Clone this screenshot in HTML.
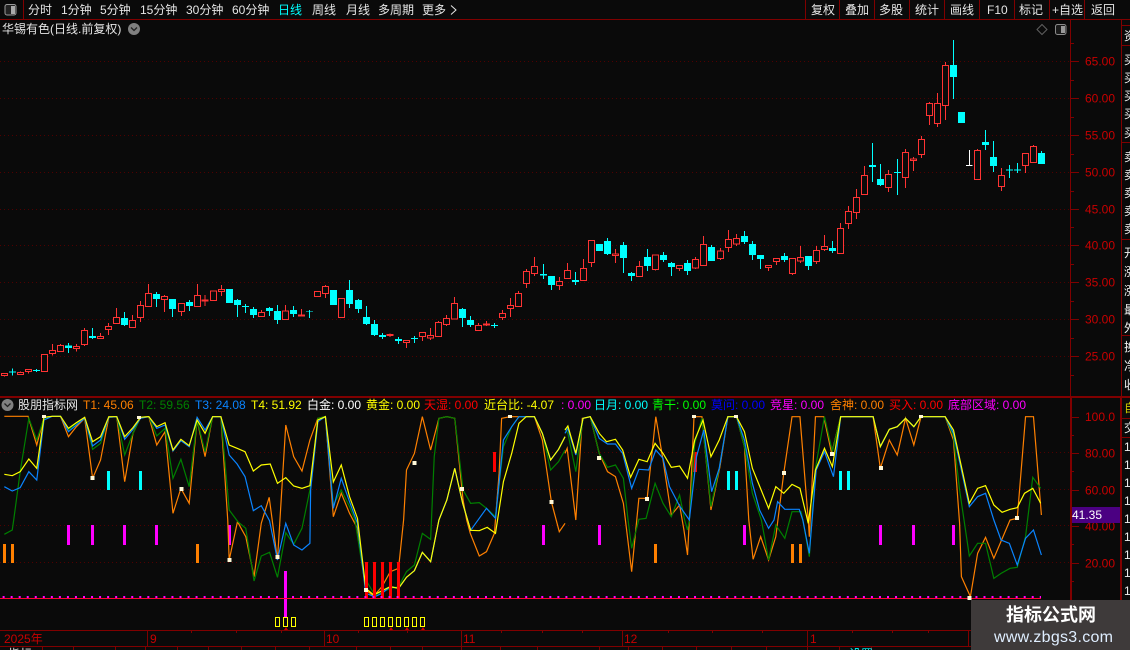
<!DOCTYPE html>
<html><head><meta charset="utf-8"><title>K线</title>
<style>
html,body{margin:0;padding:0;background:#0a0a0a;width:1130px;height:650px;overflow:hidden}
svg{display:block}
text{font-family:"Liberation Sans","WenQuanYi Zen Hei","Noto Sans CJK SC",sans-serif;font-size:12px}
.rw{stroke:#ff3333;stroke-width:3;fill:none}
.rb{fill:#0a0a0a;stroke:#ff3333;stroke-width:3}
.cw{stroke:#00ffff;stroke-width:3;fill:none}
.cb{fill:#00ffff}
.ln{fill:none;stroke-width:1.2;vector-effect:non-scaling-stroke}
.a{fill:#c80000}
.t{fill:#e6e6e6}
.s{fill:#f0f0f0}
</style></head><body>
<svg width="1130" height="650" viewBox="0 0 1130 650" xmlns="http://www.w3.org/2000/svg">
<rect width="1130" height="650" fill="#0a0a0a"/>

<!-- grid -->
<g stroke="#500000" stroke-width="1" stroke-dasharray="1 3" fill="none">
<path d="M0 61.5H1070M0 98.5H1070M0 135.5H1070M0 172.5H1070M0 209.5H1070M0 245.5H1070M0 282.5H1070M0 319.5H1070M0 356.5H1070"/>
<path d="M0 452.5H1070M0 489.5H1070M0 525.5H1070M0 562.5H1070"/>
</g>

<!-- frame -->
<g stroke="#800000" fill="none" shape-rendering="crispEdges">
<path d="M0 19.5H1130" />
<path d="M23.5 0V19M805.5 0V19M839.5 0V19M874.5 0V19M909.5 0V19M944.5 0V19M979.5 0V19M1014.5 0V19M1049.5 0V19M1084.5 0V19"/>
<path d="M1070.5 19V397"/>
<path d="M1121.5 19V397M1121 25.5H1130M1121 45.5H1130M1121 142.5H1130M1121 239.5H1130M1121 335.5H1130"/>
<path d="M0 397H1130" stroke-width="2"/>
<path d="M1071 397V630M1121 397V600" stroke-width="2"/>
<path d="M1121 418.5H1130M1121 437.5H1130"/>
<path d="M0 630.5H1130M0 646.5H1130"/>
<path d="M1070 61.5H1079M1070 98.5H1079M1070 135.5H1079M1070 172.5H1079M1070 209.5H1079M1070 245.5H1079M1070 282.5H1079M1070 319.5H1079M1070 356.5H1079M1070 80.5H1074M1070 117.5H1074M1070 154.5H1074M1070 191.5H1074M1070 227.5H1074M1070 264.5H1074M1070 301.5H1074M1070 338.5H1074M1070 375.5H1074M1070 43.5H1074"/>
<path d="M1070 417.5H1079M1070 453.5H1079M1070 490.5H1079M1070 526.5H1079M1070 563.5H1079M1070 435.5H1074M1070 471.5H1074M1070 508.5H1074M1070 544.5H1074M1070 581.5H1074"/>
<path d="M147.5 630V646M324.5 630V646M461.5 630V646M622.5 630V646M807.5 630V646M968.5 630V646"/>
<path d="M191.5 630V633M236.5 630V633M281.5 630V633M358.5 630V633M407.5 630V633M501.5 630V633M542.5 630V633M582.5 630V633M668.5 630V633M712.5 630V633M762.5 630V633M852.5 630V633M892.5 630V633M928.5 630V633"/>
<path d="M42.5 646V650M73.5 646V650M115.5 646V650M145.5 646V650M177.5 646V650M208.5 646V650M241.5 646V650M275.5 646V650M309.5 646V650M356.5 646V650M390.5 646V650M422.5 646V650M461.5 646V650M500.5 646V650M537.5 646V650M599.5 646V650M628.5 646V650M662.5 646V650M696.5 646V650M731.5 646V650M766.5 646V650M807.5 646V650M839.5 646V650M871.5 646V650"/>
</g>

<!-- toolbar -->
<rect x="5" y="4.5" width="11" height="10.5" rx="2" fill="#222" stroke="#9a9a9a"/>
<rect x="11" y="6" width="4" height="8" fill="#aaa"/>
<text x="28" y="14" class="t">分时</text>
<text x="61" y="14" class="t">1分钟</text>
<text x="100" y="14" class="t">5分钟</text>
<text x="140" y="14" class="t">15分钟</text>
<text x="186" y="14" class="t">30分钟</text>
<text x="232" y="14" class="t">60分钟</text>
<text x="278" y="14" fill="#00ffff">日线</text>
<text x="312" y="14" class="t">周线</text>
<text x="346" y="14" class="t">月线</text>
<text x="378" y="14" class="t">多周期</text>
<text x="422" y="14" class="t">更多</text>
<path d="M451 5.5L456 10L451 14.5" stroke="#e6e6e6" fill="none"/>
<text x="811" y="14" class="t">复权</text>
<text x="845" y="14" class="t">叠加</text>
<text x="879" y="14" class="t">多股</text>
<text x="915" y="14" class="t">统计</text>
<text x="950" y="14" class="t">画线</text>
<text x="987" y="14" class="t">F10</text>
<text x="1019" y="14" class="t">标记</text>
<text x="1052" y="14" class="t">+自选</text>
<text x="1091" y="14" class="t">返回</text>

<!-- title -->
<text x="2" y="33" class="t">华锡有色(日线.前复权)</text>
<circle cx="134" cy="29" r="6" fill="#808080"/>
<path d="M131 27.5L134 30.5L137 27.5" stroke="#222" fill="none" stroke-width="1.3"/>
<path d="M1042 24.5L1047 29.5L1042 34.5L1037 29.5Z" stroke="#606060" fill="none"/>
<rect x="1055.5" y="24.5" width="10.5" height="10" rx="2" fill="#1a1a1a" stroke="#8a8a8a"/>
<rect x="1061" y="26" width="4" height="7" fill="#999"/>

<!-- axis labels upper -->
<text x="1085" y="65.5" class="a">65.00</text>
<text x="1085" y="102.5" class="a">60.00</text>
<text x="1085" y="139.5" class="a">55.00</text>
<text x="1085" y="176.5" class="a">50.00</text>
<text x="1085" y="213.5" class="a">45.00</text>
<text x="1085" y="249.5" class="a">40.00</text>
<text x="1085" y="286.5" class="a">35.00</text>
<text x="1085" y="323.5" class="a">30.00</text>
<text x="1085" y="360.5" class="a">25.00</text>

<!-- candles -->
<g shape-rendering="crispEdges">
<g transform="translate(0,230) scale(.33333)">
<path class="rw" d="M13 430V440M61 424V433M85 418V431M133 373V425M157 342V377M181 342V365M229 342V365M253 294V348M301 309V326M325 279V315M349 234V281M397 255V293M421 213V276M445 162V230M493 195V246M544 220V258M592 162V230M615 195V228M640 183V212M664 165V198M784 240V260M856 225V269"/>
<path class="rb" d="M4 430H22V437H4ZM52 427H70V433H52ZM76 418H94V425H76ZM124 373H142V425H124ZM148 361H166V371H148ZM172 346H190V365H172ZM220 349H238V356H220ZM244 301H262V344H244ZM292 319H310V326H292ZM316 289H334V299H316ZM340 262H358V281H340ZM388 271H406V293H388ZM412 226H430V263H412ZM436 190H454V230H436ZM484 199H502V209H484ZM535 220H553V245H535ZM583 196H601V230H583ZM606 210H624V213H606ZM631 183H649V212H631ZM655 178H673V185H655ZM775 247H793V260H775ZM847 243H865V269H847Z"/>
<path class="cw" d="M37 415V437M109 417V426M205 339V369M277 294V327M373 246V288M469 186V231M517 207V261M568 210V243M688 177V219M712 207V261M736 222V249M760 231V264M808 231V258M832 225V282M880 228V261"/>
<path class="cb" d="M27 425H48V428H27ZM99 420H120V423H99ZM195 346H216V354H195ZM267 318H288V324H267ZM363 264H384V285H363ZM459 192H480V207H459ZM507 207H528V237H507ZM558 216H579V228H558ZM678 177H699V219H678ZM702 210H723V225H702ZM726 228H747V231H726ZM750 237H771V255H750ZM798 234H819V243H798ZM822 243H843V270H822ZM870 240H891V252H870Z"/>
</g>
<g transform="translate(300,230) scale(.33333)">
<path class="rw" d="M4 237V258M52 183V200M76 165V204M124 205V263M270 311V321M319 331V354M367 307V333M391 294V330M415 273V320M439 255V288M463 201V267M535 279V302M559 273V288M607 240V270M631 204V261M655 183V230M679 117V174M703 81V138M778 141V180M802 99V146M850 87V152M874 31V111"/>
<path class="rb" d="M-5 255H13V258H-5ZM43 184H61V200H43ZM67 169H85V191H67ZM115 205H133V263H115ZM261 314H279V317H261ZM310 331H328V338H310ZM358 307H376V320H358ZM382 316H400V324H382ZM406 277H424V320H406ZM430 265H448V284H430ZM454 220H472V267H454ZM526 286H544V302H526ZM550 282H568V285H550ZM598 250H616V263H598ZM622 226H640V236H622ZM646 190H664V230H646ZM670 124H688V161H670ZM694 109H712V131H694ZM769 154H787V167H769ZM793 121H811V146H793ZM841 115H859V152H841ZM865 31H883V98H865Z"/>
<path class="cw" d="M28 240V264M100 180V225M148 150V234M175 207V249M199 228V285M223 270V318M247 309V327M295 321V342M343 318V339M487 234V291M511 258V291M583 279V294M730 102V147M754 138V180M826 126V165"/>
<path class="cb" d="M18 243H39V245H18ZM90 180H111V225H90ZM138 180H159V222H138ZM165 210H186V237H165ZM189 261H210V282H189ZM213 282H234V315H213ZM237 315H258V321H237ZM285 327H306V333H285ZM333 324H354V327H333ZM477 237H498V264H477ZM501 270H522V285H501ZM573 285H594V288H573ZM720 132H741V137H720ZM744 138H765V165H744ZM816 150H837V156H816Z"/>
</g>
<g transform="translate(600,200) scale(.33333)">
<path class="rw" d="M46 147V189M118 183V230M166 165V212M238 195V213M286 171V207M310 108V197M361 144V180M385 90V156M409 102V138M505 195V213M529 174V195M577 175V225M601 138V189M649 138V192M673 105V153M721 69V161"/>
<path class="rb" d="M37 162H55V167H37ZM109 199H127V230H109ZM157 165H175V209H157ZM229 196H247V206H229ZM277 178H295V204H277ZM301 133H319V197H301ZM352 153H370V176H352ZM376 118H394V143H376ZM400 115H418V132H400ZM496 196H514V203H496ZM520 175H538V185H520ZM568 175H586V221H568ZM592 172H610V183H592ZM640 151H658V185H640ZM664 139H682V149H664ZM712 85H730V161H712Z"/>
<path class="cw" d="M22 114V165M70 126V219M94 216V243M142 147V213M190 156V186M214 186V228M262 180V225M334 135V183M433 93V132M457 123V180M481 165V207M553 159V186M625 168V210M697 123V159"/>
<path class="cb" d="M-12 132H9V153H-12ZM12 123H33V162H12ZM60 135H81V174H60ZM84 219H105V228H84ZM132 171H153V198H132ZM180 165H201V180H180ZM204 189H225V201H204ZM252 189H273V213H252ZM324 141H345V183H324ZM423 108H444V126H423ZM447 132H468V165H447ZM471 165H492V177H471ZM543 168H564V180H543ZM615 168H636V198H615ZM687 144H708V153H687Z"/>
</g>
<g transform="translate(830,30) scale(.33333)">
<path class="rw" d="M55 528V597M79 477V567M103 408V494M175 420V486M226 357V474M250 381V423M274 318V384M298 216V285M322 189V291M346 96V270M442 357V449M514 414V483M586 369V429M610 345V398"/>
<path class="rb" d="M46 544H64V581H46ZM70 502H88V548H70ZM94 436H112V494H94ZM166 433H184V472H166ZM217 367H235V443H217ZM241 387H259V392H241ZM265 328H283V373H265ZM289 220H307V257H289ZM313 220H331V281H313ZM337 106H355V226H337ZM433 361H451V449H433ZM505 436H523V470H505ZM577 370H595V407H577ZM601 349H619V398H601Z"/>
<path class="cw" d="M127 339V456M151 402V468M202 387V495M370 30V207M466 300V360M490 333V426M538 405V444M562 399V429M634 363V402"/>
<path class="cb" d="M117 405H138V411H117ZM141 447H162V465H141ZM192 426H213V429H192ZM360 105H381V141H360ZM384 246H405V279H384ZM456 336H477V345H456ZM480 381H501V408H480ZM528 418H549V422H528ZM552 418H573V422H552ZM624 369H645V402H624Z"/>
<path d="M418 360V407M408 406H427" stroke="#ffffff" stroke-width="3" fill="none"/>
</g>
</g>

<!-- lower panel header -->
<circle cx="7.5" cy="405" r="6" fill="#808080"/>
<path d="M4.5 403.5L7.5 406.5L10.5 403.5" stroke="#222" fill="none" stroke-width="1.3"/>
<text x="18" y="409" fill="#e6e6e6">股朋指标网</text>
<text x="83" y="409" fill="#ff8000">T1: 45.06</text>
<text x="139" y="409" fill="#008000">T2: 59.56</text>
<text x="195" y="409" fill="#0a84ff">T3: 24.08</text>
<text x="251" y="409" fill="#ffff00">T4: 51.92</text>
<text x="307" y="409" fill="#ffffff">白金: 0.00</text>
<text x="366" y="409" fill="#ffff00">黄金: 0.00</text>
<text x="424" y="409" fill="#ff0000">天湿: 0.00</text>
<text x="484" y="409" fill="#ffff00">近台比: -4.07</text>
<text x="561" y="409" fill="#ff00ff">: 0.00</text>
<text x="594" y="409" fill="#00ffff">日月: 0.00</text>
<text x="652" y="409" fill="#00ff00">青干: 0.00</text>
<text x="711" y="409" fill="#0000ff">莫问: 0.00</text>
<text x="770" y="409" fill="#ff00ff">竞星: 0.00</text>
<text x="830" y="409" fill="#ff8000">舍神: 0.00</text>
<text x="889" y="409" fill="#ff0000">买入: 0.00</text>
<text x="948" y="409" fill="#ff00ff">底部区域: 0.00</text>

<!-- axis labels lower -->
<text x="1085" y="421" class="a">100.0</text>
<text x="1085" y="457.5" class="a">80.00</text>
<text x="1085" y="494.5" class="a">60.00</text>
<text x="1085" y="530.5" class="a">40.00</text>
<text x="1085" y="567.5" class="a">20.00</text>
<rect x="1072" y="507" width="48" height="16" fill="#4b0082"/>
<text x="1072" y="519" fill="#ffffff">41.35</text>

<!-- bars under lines -->
<g shape-rendering="crispEdges">
<g fill="#00ffff"><rect x="107" y="471" width="3" height="19"/><rect x="139" y="471" width="3" height="19"/><rect x="727" y="471" width="3" height="19"/><rect x="735" y="471" width="3" height="19"/><rect x="839" y="471" width="3" height="19"/><rect x="847" y="471" width="3" height="19"/></g>
<g fill="#ff00ff"><rect x="67" y="525" width="3" height="20"/><rect x="91" y="525" width="3" height="20"/><rect x="123" y="525" width="3" height="20"/><rect x="155" y="525" width="3" height="20"/><rect x="228" y="525" width="3" height="20"/><rect x="542" y="525" width="3" height="20"/><rect x="598" y="525" width="3" height="20"/><rect x="743" y="525" width="3" height="20"/><rect x="879" y="525" width="3" height="20"/><rect x="912" y="525" width="3" height="20"/><rect x="952" y="525" width="3" height="20"/></g>
<g fill="#ff8000"><rect x="3" y="544" width="3" height="19"/><rect x="11" y="544" width="3" height="19"/><rect x="196" y="544" width="3" height="19"/><rect x="654" y="544" width="3" height="19"/><rect x="791" y="544" width="3" height="19"/><rect x="799" y="544" width="3" height="19"/></g>
<g fill="#ff0000"><rect x="493" y="452" width="3" height="20"/><rect x="693" y="452" width="4" height="20"/></g>
</g>

<!-- indicator lines -->
<g transform="translate(0,390) scale(.36036,.33333)">
<polyline class="ln" stroke="#ff8000" points="12,79 56,79 78,79 102,165 122,82 145,79 168,79 190,140 212,110 235,85 257,265 279,210 302,82 324,80 346,275 369,130 390,82 413,80 435,165 458,125 480,370 502,295 525,340 547,90 569,200 590,80 613,80 632,390 636,510 659,395 682,440 705,560 725,400 747,322 770,510 793,105 815,200 838,243 860,150 882,85 903,80 925,380 947,310 970,370 992,415 1015,600 1037,618 1060,590 1083,545 1106,535 1120,390 1128,240 1150,190 1172,80 1195,180 1218,85 1240,80 1262,85 1285,330 1295,390 1305,430 1330,498 1350,485 1372,430 1385,250 1392,85 1415,80 1483,80 1505,150 1530,335 1552,425 1568,400"/>
<polyline class="ln" stroke="#008000" points="12,433 34,420 38,390 56,245 80,85 102,150 122,85 145,79 168,79 190,120 212,100 235,85 257,178 279,160 302,82 324,80 346,195 369,130 390,82 413,80 435,138 458,115 480,265 502,208 525,290 547,90 569,185 590,80 613,80 636,360 660,395 682,415 705,573 725,498 748,487 770,562 793,428 815,463 838,415 860,300 882,85 903,80 925,345 947,300 970,350 985,390 1010,560 1040,615 1085,595 1106,590 1128,545 1150,525 1172,430 1195,448 1205,200 1218,85 1240,80 1262,85 1285,300 1306,340 1330,338 1350,355 1375,380 1397,170 1420,110 1440,80 1483,80 1505,130 1528,240 1550,215 1568,180"/>
<polyline class="ln" stroke="#0a84ff" points="12,290 34,303 56,293 80,245 102,270 122,90 145,79 168,79 190,125 212,105 235,85 257,168 279,150 302,82 324,80 346,148 369,118 390,85 413,80 435,115 458,105 480,183 502,152 525,170 547,82 569,120 590,80 613,80 636,195 658,222 680,260 703,362 725,347 748,392 770,510 793,400 815,465 838,480 860,460 862,300 882,95 903,80 925,355 947,265 970,335 992,400 1015,610 1040,620 1060,610 1083,590 1106,595 1128,562 1150,542 1172,487 1195,515 1218,390 1240,330 1262,235 1284,340 1306,421 1330,385 1350,355 1375,385 1397,150 1420,110 1440,80 1483,80 1505,130 1528,210 1550,178 1568,140"/>
<polyline class="ln" stroke="#ffff00" points="12,253 34,257 56,245 80,207 102,235 122,82 145,79 168,79 190,115 212,98 235,82 257,155 279,140 302,80 324,80 346,140 369,113 390,82 413,80 435,110 458,98 480,180 502,148 525,167 547,90 569,130 590,80 613,80 636,165 658,175 680,185 703,243 725,225 750,222 770,280 793,263 815,288 838,295 860,287 882,90 903,80 925,276 947,225 970,320 992,385 1015,595 1037,615 1060,602 1083,590 1106,595 1128,562 1150,542 1172,487 1195,515 1218,390 1240,330 1262,235 1284,340 1306,421 1330,422 1352,412 1375,430 1397,275 1420,190 1440,100 1460,80 1483,80 1505,130 1528,210 1550,178 1568,140"/>
</g>
<g transform="translate(565,390) scale(.36036,.33333)">
<polyline class="ln" stroke="#ff8000" points="0,190 6,175 30,390 48,85 70,80 95,190 118,245 140,260 162,340 185,545 205,325 228,325 252,80 272,210 295,375 318,345 330,420 340,495 345,390 358,80 380,80 405,360 430,230 452,80 476,80 498,170 510,390 522,508 543,440 565,510 585,440 607,250 630,80 652,80 675,390 678,440 695,80 718,80 740,190 765,80 855,80 875,235 900,150 922,195 945,85 968,165 988,80 1055,80 1078,150 1095,400 1100,560 1125,620 1145,490 1167,442 1190,505 1235,390 1255,385 1278,80 1300,80 1322,375"/>
<polyline class="ln" stroke="#008000" points="0,115 8,130 30,245 50,85 70,80 95,190 118,232 140,225 162,265 175,390 185,475 205,388 225,385 250,280 272,340 295,380 318,315 332,390 340,420 345,390 360,160 380,85 405,350 428,235 452,80 476,80 498,170 520,310 545,390 565,510 585,405 610,445 630,365 655,365 660,390 678,500 695,235 720,80 742,185 765,80 855,80 875,170 900,118 922,110 945,85 968,110 988,80 1055,80 1078,140 1095,300 1122,498 1145,460 1167,460 1190,565 1210,550 1235,535 1255,532 1278,440 1298,262 1320,295"/>
<polyline class="ln" stroke="#0a84ff" points="0,130 8,115 30,195 50,85 70,80 95,145 118,162 140,162 160,190 185,295 205,238 232,240 252,180 272,205 290,290 318,348 345,390 365,200 385,120 407,305 428,235 452,80 476,80 498,150 520,280 540,360 565,415 580,390 590,335 610,358 650,358 660,390 678,490 697,240 720,185 745,260 765,80 855,80 875,170 900,118 922,110 945,85 968,110 988,80 1055,80 1078,130 1100,240 1122,350 1145,320 1167,310 1190,390 1210,450 1233,460 1255,525 1278,445 1300,420 1322,495"/>
<polyline class="ln" stroke="#ffff00" points="0,120 8,108 30,190 50,85 70,80 95,130 115,155 140,148 160,180 182,262 205,208 228,215 250,160 272,190 295,232 318,228 340,265 360,150 383,90 405,200 428,150 452,80 476,80 498,125 520,235 565,355 585,290 607,310 630,283 652,295 675,400 695,240 720,175 742,230 765,80 855,80 875,170 900,118 922,110 945,85 968,110 988,80 1055,80 1078,120 1100,230 1122,340 1145,295 1167,287 1190,345 1213,367 1235,358 1255,353 1275,310 1298,295 1320,340"/>
</g>

<!-- red row and bottom line -->
<g shape-rendering="crispEdges">
<g fill="#ff0000"><rect x="365" y="562" width="3" height="37"/><rect x="373" y="562" width="3" height="37"/><rect x="381" y="562" width="3" height="37"/><rect x="389" y="562" width="3" height="37"/><rect x="397" y="562" width="3" height="37"/></g>
<rect x="284" y="571" width="3" height="46" fill="#ff00ff"/>
<rect x="0" y="598" width="1041" height="1" fill="#ff0033"/>
</g>
<line x1="2.6" y1="597" x2="1041" y2="597" stroke="#ff00ff" stroke-width="2" stroke-dasharray="2 6.04"/>

<!-- markers -->
<g fill="#fff8d8" shape-rendering="crispEdges">
<rect x="90.5" y="476" width="4" height="4"/><rect x="179.5" y="487" width="4" height="4"/><rect x="412.5" y="461" width="4" height="4"/><rect x="460" y="487" width="4" height="4"/><rect x="549.5" y="500" width="4" height="4"/><rect x="42" y="415" width="4" height="3"/><rect x="137" y="416" width="4" height="3"/><rect x="508" y="415" width="4" height="3"/>
<rect x="597" y="456" width="4" height="4"/><rect x="645" y="497" width="4" height="4"/><rect x="692" y="415" width="4" height="3"/><rect x="734" y="415" width="4" height="3"/><rect x="782" y="471" width="4" height="4"/><rect x="830" y="452" width="4" height="4"/><rect x="879" y="466" width="4" height="4"/><rect x="919" y="415" width="4" height="3"/><rect x="1015" y="516" width="4" height="4"/>
<rect x="227.5" y="558" width="4" height="4"/><rect x="275.5" y="555" width="4" height="4"/><rect x="364" y="588" width="4" height="4"/><rect x="967.5" y="596" width="4" height="4"/>
</g>

<!-- tofu yellow boxes -->
<g fill="none" stroke="#ffff00" shape-rendering="crispEdges">
<rect x="275.5" y="617.5" width="4" height="9"/><rect x="283.5" y="617.5" width="4" height="9"/><rect x="291.5" y="617.5" width="4" height="9"/>
<rect x="364.5" y="617.5" width="4" height="9"/><rect x="372.5" y="617.5" width="4" height="9"/><rect x="380.5" y="617.5" width="4" height="9"/><rect x="388.5" y="617.5" width="4" height="9"/><rect x="396.5" y="617.5" width="4" height="9"/><rect x="404.5" y="617.5" width="4" height="9"/><rect x="412.5" y="617.5" width="4" height="9"/><rect x="420.5" y="617.5" width="4" height="9"/>
</g>
<path d="M284 630L286 627L288 630ZM389 630L391 627L393 630ZM405 630L407 627L409 630ZM421 630L423 627L425 630Z" fill="#c80000"/>

<!-- x axis labels -->
<text x="4" y="643" class="a">2025年</text>
<text x="150" y="643" class="a">9</text>
<text x="326" y="643" class="a">10</text>
<text x="463" y="643" class="a">11</text>
<text x="624" y="643" class="a">12</text>
<text x="810" y="643" class="a">1</text>

<!-- bottom strip fragments -->
<text x="8" y="658" fill="#e6e6e6">指标</text>
<text x="48" y="658" fill="#e6e6e6">+</text>
<text x="826" y="658" fill="#e6e6e6">+</text>
<text x="849" y="658" fill="#00ffff">设置</text>

<!-- right strip clipped text -->
<defs><clipPath id="cp"><rect x="1122" y="19" width="8" height="580"/></clipPath></defs>
<g clip-path="url(#cp)">
<text x="1124" y="40" class="s">资</text>
<text x="1124" y="64" class="s">买</text><text x="1124" y="82" class="s">买</text><text x="1124" y="100" class="s">买</text><text x="1124" y="118" class="s">买</text><text x="1124" y="137" class="s">买</text>
<text x="1124" y="161" class="s">卖</text><text x="1124" y="179" class="s">卖</text><text x="1124" y="197" class="s">卖</text><text x="1124" y="215" class="s">卖</text><text x="1124" y="233" class="s">卖</text>
<text x="1124" y="257" class="s">开</text><text x="1124" y="276" class="s">涨</text><text x="1124" y="295" class="s">涨</text><text x="1124" y="314" class="s">最</text><text x="1124" y="332" class="s">外</text>
<text x="1124" y="351" class="s">换</text><text x="1124" y="370" class="s">净</text><text x="1124" y="389" class="s">收</text>
<text x="1124" y="412" fill="#c8c800">自</text>
<text x="1124" y="432" class="s">交</text>
<text x="1124" y="451" class="s">1</text><text x="1124" y="469" class="s">1</text><text x="1124" y="487" class="s">1</text><text x="1124" y="505" class="s">1</text><text x="1124" y="523" class="s">1</text><text x="1124" y="541" class="s">1</text><text x="1124" y="559" class="s">1</text><text x="1124" y="577" class="s">1</text><text x="1124" y="595" class="s">1</text>
</g>

<!-- watermark -->
<rect x="971" y="600" width="159" height="50" fill="#3e3a3a"/>
<text x="1006" y="621" fill="#ffffff" font-weight="bold" style="font-size:18px">指标公式网</text>
<text x="994" y="642" fill="#dfeeff" style="font-size:16px" textLength="119">www.zbgs3.com</text>
</svg>
</body></html>
